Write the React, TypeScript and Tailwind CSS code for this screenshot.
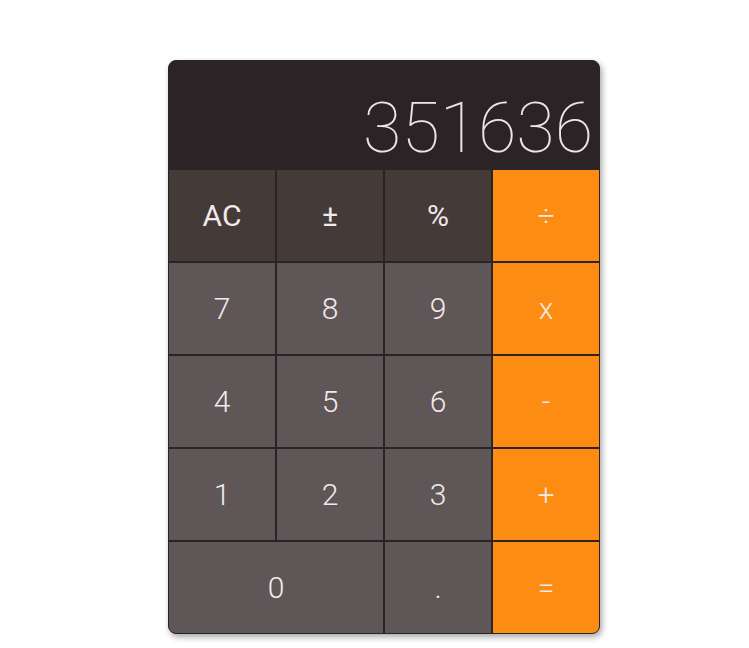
import React from 'react';

const rows = [
  [
    { label: 'AC', kind: 'fn' },
    { label: '±', kind: 'fn' },
    { label: '%', kind: 'fn' },
    { label: '÷', kind: 'op' },
  ],
  [
    { label: '7', kind: 'num' },
    { label: '8', kind: 'num' },
    { label: '9', kind: 'num' },
    { label: 'x', kind: 'op' },
  ],
  [
    { label: '4', kind: 'num' },
    { label: '5', kind: 'num' },
    { label: '6', kind: 'num' },
    { label: '-', kind: 'op' },
  ],
  [
    { label: '1', kind: 'num' },
    { label: '2', kind: 'num' },
    { label: '3', kind: 'num' },
    { label: '+', kind: 'op' },
  ],
];

function Key({ label, kind, wide }: { label: string; kind: string; wide?: boolean }) {
  const color =
    kind === 'op'
      ? 'bg-[#fd8c12] font-light'
      : kind === 'fn'
      ? 'bg-[#443a38] font-normal'
      : 'bg-[#5f5757] font-light';
  return (
    <button
      className={`${color} ${wide ? 'col-span-2' : ''} flex items-center justify-center text-[30px] text-[#f1eaea] h-[91px]`}
    >
      {label}
    </button>
  );
}

export default function App() {
  return (
    <div className="min-h-screen bg-white" style={{ fontFamily: 'Roboto, sans-serif' }}>
      <div className="pt-[60px] pl-[168px]">
        <div className="w-[432px] rounded-lg overflow-hidden border border-[#2b2426] bg-[#2b2426] shadow-[2px_3px_6px_rgba(0,0,0,0.35)]">
          <div className="h-[109px] flex items-end justify-end pr-[6px] pb-[7px]">
            <span className="text-[70px] font-thin leading-none text-[#eee6e6]">351636</span>
          </div>
          <div className="grid grid-cols-4 gap-[2px]">
            {rows.map((row) =>
              row.map((k) => <Key key={k.label} label={k.label} kind={k.kind} />)
            )}
            <Key label="0" kind="num" wide />
            <Key label="." kind="num" />
            <Key label="=" kind="op" />
          </div>
        </div>
      </div>
    </div>
  );
}
